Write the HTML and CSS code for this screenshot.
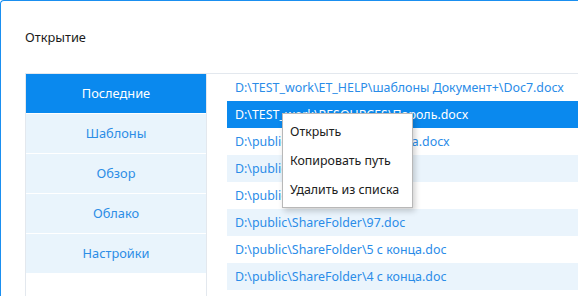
FILE: index.html
```html
<!DOCTYPE html>
<html lang="ru">
<head>
    <meta charset="UTF-8">
    <title>Открытие</title>
    <link rel="stylesheet" href="styles.css">
</head>
<body>
    <div class="window">
        <div class="title">Открытие</div>
        <div class="panel">
            <div class="side">
                <div class="side-item active">Последние</div>
                <div class="side-item">Шаблоны</div>
                <div class="side-item">Обзор</div>
                <div class="side-item">Облако</div>
                <div class="side-item">Настройки</div>
            </div>
            <div class="files">
                <div class="file">D:\TEST_work\ET_HELP\шаблоны Документ+\Doc7.docx</div>
                <div class="file selected">D:\TEST_work\RESOURCES\Пароль.docx</div>
                <div class="file">D:\public\ShareFolder\с начала.docx</div>
                <div class="file odd">D:\public\ShareFolder\2.doc</div>
                <div class="file">D:\public\ShareFolder\98.doc</div>
                <div class="file odd">D:\public\ShareFolder\97.doc</div>
                <div class="file">D:\public\ShareFolder\5 с конца.doc</div>
                <div class="file odd">D:\public\ShareFolder\4 с конца.doc</div>
            </div>
        </div>
        <!-- контекстное меню -->
        <div class="menu">
            <div class="menu-item">Открыть</div>
            <div class="menu-item">Копировать путь</div>
            <div class="menu-item">Удалить из списка</div>
        </div>
    </div>
</body>
</html>
```
FILE: styles.css
```css
body {
    margin: 0;
    width: 578px;
    height: 296px;
    overflow: hidden;
    background: #fff;
    font-family: "Noto Sans", "Open Sans", sans-serif;
    font-size: 12.4px;
}

.window {
    position: relative;
    height: 100%;
    border-top: 1px solid #1a8ff0;
    border-left: 1px solid #1a8ff0;
    border-top-left-radius: 4px;
    box-sizing: border-box;
}

.title {
    height: 72px;
    line-height: 72px;
    padding-left: 24px;
    font-size: 12.8px;
    color: #1b1b1b;
}

.panel {
    display: flex;
    margin-left: 24px;
    height: 230px;
    border-top: 1px solid #e3e8ee;
    border-left: 1px solid #e3e8ee;
}

.side {
    width: 180px;
    flex-shrink: 0;
    border-right: 1px solid #e3e8ee;
}

    .side-item {
        height: 39px;
        line-height: 39px;
        text-align: center;
        font-size: 12.8px;
        background: #e9f4fc;
        color: #2c8de6;
        border-bottom: 1px solid #fff;
    }

        .side-item.active {
            background: #0a89ee;
            color: #fff;
        }

.files {
    flex: 1;
    padding-left: 20px;
    overflow: hidden;
}

.file {
    height: 27px;
    line-height: 27px;
    padding-left: 8px;
    white-space: nowrap;
    color: #2a8ce8;
}

    .file.odd {
        background: #eaf4fc;
    }

    .file.selected {
        background: #0a89ee;
        color: #fff;
    }

.menu {
    position: absolute;
    left: 281px;
    top: 112px;
    width: 129px;
    padding: 3px 0;
    background: #fff;
    border: 1px solid #b8b8b8;
    box-shadow: 2px 3px 6px rgba(0, 0, 0, 0.2);
}

.menu-item {
    height: 29px;
    line-height: 29px;
    padding-left: 7px;
    color: #202020;
    white-space: nowrap;
}
```
